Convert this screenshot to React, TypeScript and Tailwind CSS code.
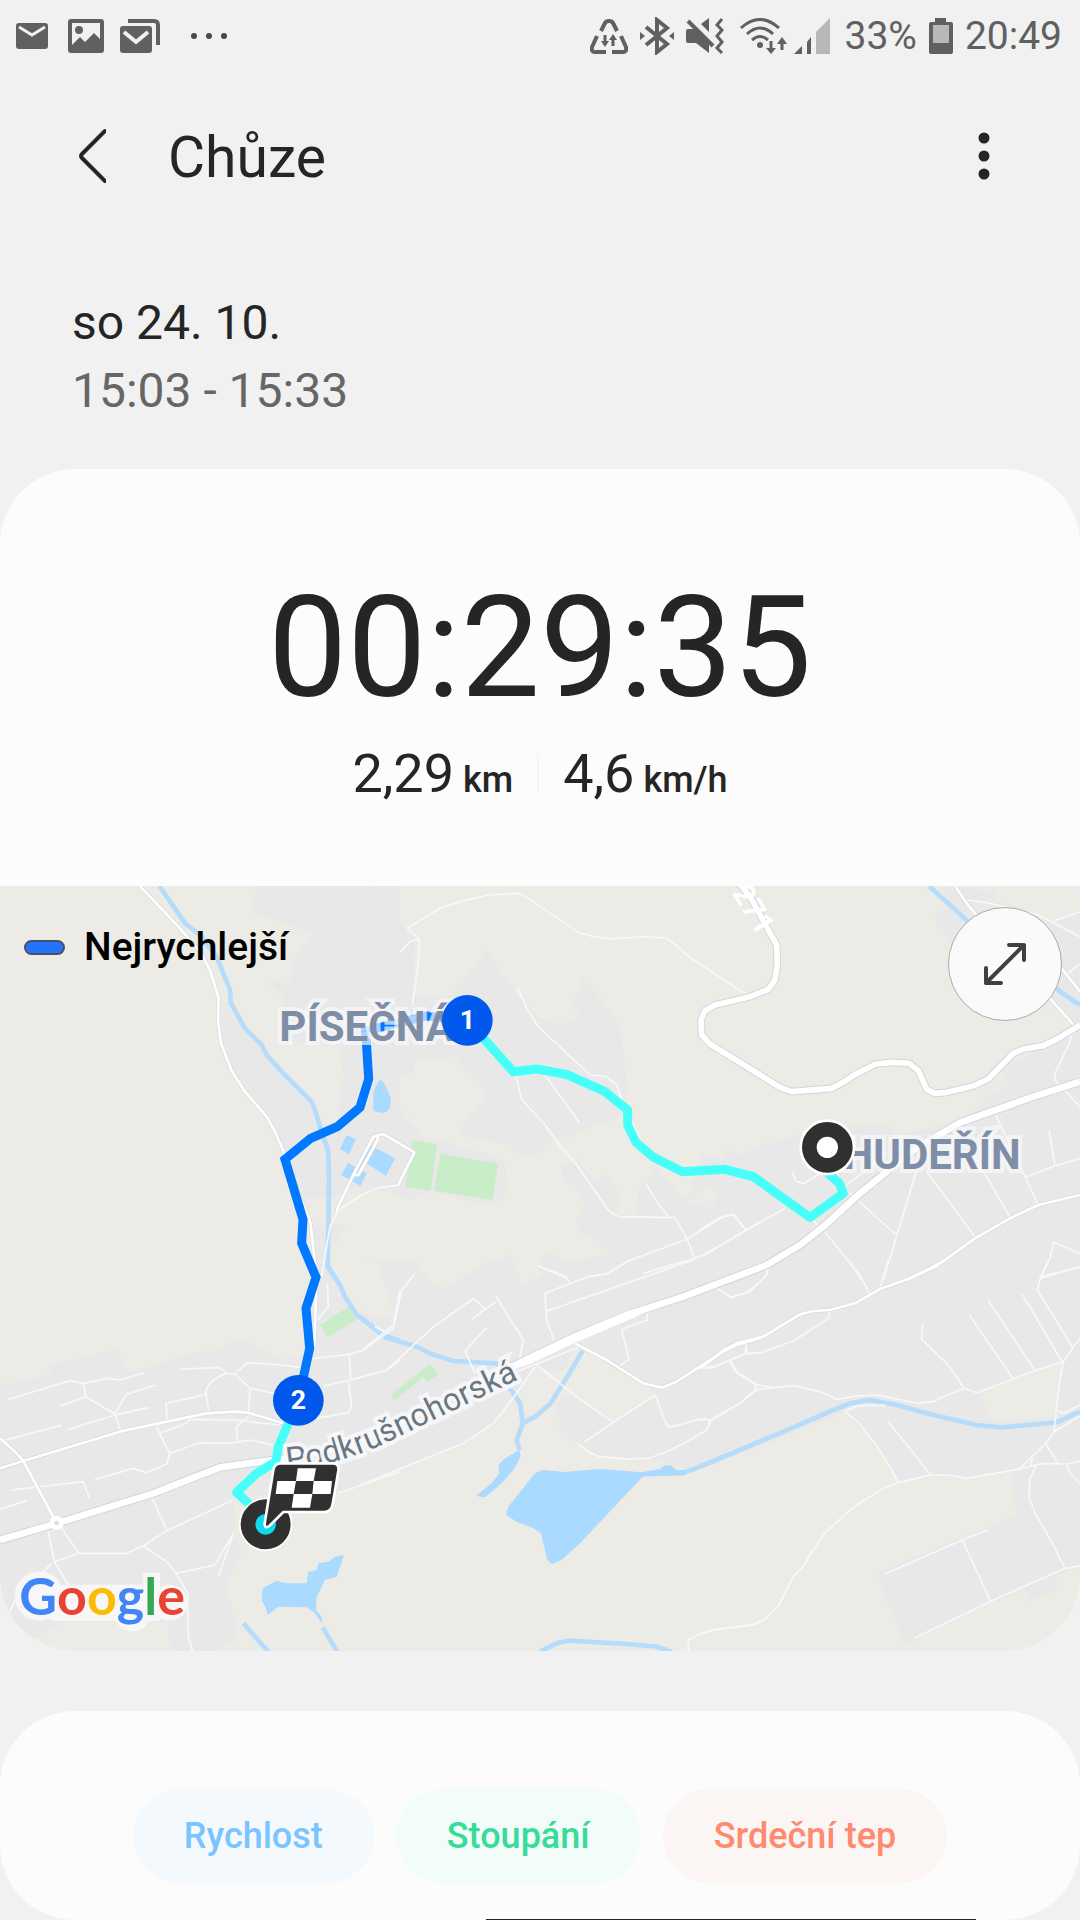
import { useState } from "react";

// The map is stored as six tiles, every tile with its own origin.
type Tile = {
  x: number;
  y: number;
  urban?: string;
  land?: string;
  park?: string;
  lake?: string;
  river?: string;
  street?: string;
  road?: string;
  highway?: string;
};

const TILES: Tile[] = [
  {
    x: 0,
    y: -18,
    urban:
      "M770,18 757,100 845,125 935,160 885,235 870,310 805,305 850,350 860,480 1020,500 1030,600 1010,720 965,740 940,680 860,590 790,500 720,430 690,370 662,370 656,470 690,575 735,640 800,710 850,815 900,955 1010,950 1050,920 1200,940 1200,18Z M925,1035 1035,1035 990,1120 970,1200 950,1200Z",
    lake: "M1120,690 V640 Q1130,605 1142,600 Q1155,605 1172,655 Q1175,695 1150,698 Q1125,698 1120,690Z M1040,765 1068,778 1047,823 1020,807Z M1115,795 1128,805 1185,835 1158,887 1098,850 1070,880 1085,840Z M1045,848 1070,865 1100,880 1082,917 1023,885Z",
    river:
      "M478,18 555,130 600,165 650,230 690,330 693,370 735,445 785,495 800,525 850,580 935,665 945,690 960,740 985,815 987,900 983,1160 1010,1200",
    street: "M1195,915 1130,925 1085,945 1015,990 990,1040 978,1110 965,1190",
    road: "M420,18 540,145 600,215 630,270 656,355 654,420 663,490 695,573 735,635 800,710 825,755 855,825 900,950 932,1030 945,1150 948,1200 M1012,995 V985 L1060,885 1120,770 1150,762 1243,817 1193,918 M1135,770 1130,785 1075,885 1062,885",
  },
  {
    x: 1080,
    y: -18,
    urban:
      "M0,18 38,18 50,60 165,170 160,350 275,345 380,212 470,345 530,410 610,435 660,400 635,375 670,293 780,435 800,600 790,705 690,740 630,770 585,775 530,830 480,830 445,795 300,765 305,740 385,640 285,530 165,545 160,580 105,585 120,690 190,770 410,830 435,850 445,920 430,960 375,975 215,935 145,960 60,920 0,945Z M890,865 970,955 1000,925 990,905 1030,880 1090,850 1095,805 1140,825 1200,800 1200,1200 480,1200 535,1165 555,1120 640,1145 760,1120 655,1050 650,1015 675,970 640,905 610,910 605,860 650,835 700,900 740,885 785,955 755,1000 830,1005 835,930Z M55,1155 165,1137 205,1200 70,1200Z M330,1200 450,1120 470,1200Z",
    land: "M985,970 1050,985 1080,950 1045,925 1010,940Z",
    park: "M157,780 231,793 212,933 135,920Z M241,821 414,850 398,960 222,932Z",
    street:
      "M157,375 175,250 178,178 142,145 240,85 310,62 385,45 478,40 520,65 655,157 700,170 750,177 850,170 920,174 1000,240 1155,340 M120,218 150,185 175,178 M472,322 500,385 535,440 690,585 740,590 770,615 785,660 M805,700 840,780 M468,590 485,658 555,735 610,810 655,860 740,985 760,1003 780,1010 945,1013 980,1075 1005,1135 M555,585 658,728 M860,915 890,965 925,1010 M535,1157 620,1190 M690,1190 745,1180 800,1145 980,1078 1090,1010 1120,1003 1158,1050 1200,1025 M850,1180 1005,1135 1035,1125 1158,1050",
  },
  {
    x: 2100,
    y: -18,
    urban:
      "M0,820 70,840 80,805 115,830 170,800 300,765 480,735 580,740 575,765 700,745 850,685 840,665 930,610 900,570 1030,500 1130,440 1140,440 1140,1200 0,1200Z M715,18 885,35 885,65 1020,105 1060,125 1140,100 1140,470 1050,350 750,180 710,130 705,100 755,80Z",
    land: "M0,935 35,925 60,950 30,985 0,970Z",
    river: "M687,18 805,125 M1070,325 1090,342 1140,375",
    street:
      "M800,60 860,68 1015,105 1140,170 M1055,125 1140,95 M1115,465 1110,485 1065,580 1065,600 1140,680 M885,700 1015,975 M450,940 587,1063 M650,870 550,1200 M680,875 825,1070 M820,820 930,1012 M905,735 880,740 M1047,750 1065,858 M975,892 1065,858 1140,835 M340,1022 370,1050 455,1155 485,1200 M275,875 290,905 312,910 380,870 M440,915 560,820 M255,985 0,1130 M0,1050 60,1012 100,1003 137,1050 M1060,1087 1140,1120 M1060,1087 1050,1135 1020,1195 1140,1160 M205,1160 200,1185 185,1200 M1100,285 1140,250",
    road: "M765,18 800,70 900,190 1000,300 1130,445 1140,450 M1085,265 1140,335 M1140,945 1015,975 930,1015 825,1075 710,1158 620,1200",
    highway:
      "M110,0 150,50 205,150 230,195 232,250 225,300 205,328 150,350 45,375 15,392 3,420 5,465 30,492 240,622 275,635 395,625 430,607 470,580 528,552 575,547 628,550 655,572 680,628 705,640 740,637 820,618 865,597 940,520 970,507 1030,497 1075,475 1140,435",
  },
  {
    x: 0,
    y: 1122,
    urban:
      "M0,375 150,345 148,315 355,268 385,340 575,280 660,270 715,232 850,300 900,290 945,150 960,0 985,0 1030,110 1060,150 1200,190 1200,625 1020,700 850,700 700,720 700,820 725,870 680,975 715,1130 650,1172 510,1172 505,1090 270,1040 100,1140 0,1140Z M1135,12 1200,0 1200,190 1185,155Z",
    park: "M960,195 1045,140 1068,180 985,232Z M1172,405 1200,382 1200,405 1185,420Z",
    lake: "M1032,886 1010,950 975,960 950,1010 948,1050 965,1070 965,1090 945,1060 920,1042 835,1040 803,1065 798,1045 785,1020 788,985 830,962 860,970 920,970 925,935 950,930 955,910 985,905 1005,890Z",
    river: "M983,0 985,20 1020,75 1035,110 1070,165 1150,225 1200,243 M730,1090 805,1175 M968,1102 1012,1175",
    street:
      "M20,420 210,362 250,370 325,355 360,360 435,338 M250,370 258,410 345,463 362,515 M183,437 258,410 M200,510 345,465 445,443 M345,460 380,403 468,375 M540,327 660,323 682,340 705,342 740,308 845,315 900,322 M627,460 618,400 Q618,360 682,340 M705,342 750,385 745,460 M750,385 830,402 M620,403 498,430 502,485 M470,500 478,520 560,490 570,478 700,480 840,495 M0,545 185,495 M478,520 510,580 500,612 440,638 400,625 285,658 M510,580 600,548 690,550 750,540 820,555 M745,470 710,500 712,545 M35,690 250,665 268,715 M0,748 80,722 M455,710 500,812 430,858 380,880 237,880 185,805 M237,880 163,905 145,815 M500,812 700,720 M163,905 205,975 M155,910 45,1020 30,1055 M430,858 500,905 528,940 645,915 700,820 M528,940 563,1000 565,1130 578,1175 M700,820 655,950 M925,297 1048,283 1085,272 1155,215 1180,195 1200,90 M1048,283 1052,360 1160,330 1200,300 M1045,365 1055,440 1045,457 950,475 M970,378 1052,360 M982,70 985,140 948,185 M1015,700 1200,635 M1125,200 1155,215",
    road: "M0,625 70,603 360,515 500,485 620,460 700,455 745,458 850,490 M0,535 45,575 70,603 165,780 M945,20 948,110 943,260",
  },
  {
    x: 1080,
    y: 1122,
    urban:
      "M0,0 1200,0 1200,540 980,630 890,600 860,595 720,590 660,555 590,495 605,480 580,450 610,400 660,420 760,487 890,400 650,250 620,320 600,340 525,320 470,400 400,490 310,550 0,675Z",
    land: "M0,0 55,10 85,100 105,180 0,155Z M165,0 205,60 245,90 400,0Z M460,0 485,75 545,45 535,18 550,0Z",
    park: "M92,405 210,312 235,342 205,367 190,352 105,420Z",
    lake: "M548,630 615,636 720,627 845,637 900,627 915,615 935,617 948,630 980,630 975,646 850,648 735,770 660,850 605,900 575,912 562,900 543,820 520,805 470,785 438,765 445,740 525,640Z M478,570 482,590 460,630 425,670 375,712 348,708 395,670 418,640 415,615 435,595Z",
    river:
      "M0,170 75,232 170,260 215,283 280,303 410,310 450,385 480,430 488,490 470,540 478,570 M668,272 625,345 570,432 525,470 488,490 M845,643 970,638 1000,628 1200,545 M540,1175 590,1150 625,1142 800,1152 890,1160 935,1175",
    street:
      "M0,278 100,205 125,90 165,40 M45,200 75,215 M0,352 80,330 215,205 340,115 375,147 335,180 M375,147 407,127 M408,110 490,240 478,300 M380,203 315,272 345,340 M0,675 310,550 400,490 470,400 525,320 M470,335 655,262 M530,315 665,422 760,487 675,545 M582,240 560,180 555,100 690,48 740,42 810,0 M555,155 970,10 1000,0 M535,18 620,55 630,68 M1070,85 1115,112 1165,95 1200,65 M860,155 862,180 785,208 807,298 780,317 M885,405 760,487 M885,405 920,495 930,502 1015,478 1050,480 1040,510 975,548 910,580 865,595 790,597 720,590 685,575 658,555 M1020,325 1060,322 1110,300 1160,280 1200,278 M1110,300 1130,335 1187,372 1187,390 1140,430 1050,480 M1160,280 1158,250 M985,1172 985,1140 1020,1122 1065,1108 1180,1093 1200,1083",
    road: "M645,250 740,300 850,370 905,383 950,365 1090,275 1130,255 1200,235",
  },
  {
    x: 2100,
    y: 1122,
    urban:
      "M0,0 1140,0 1140,920 1100,930 1065,950 1075,985 990,1022 970,990 870,1030 615,1152 530,940 950,765 930,635 800,655 690,645 595,670 520,540 435,455 0,630Z",
    land: "M835,400 1090,305 1065,470 885,490Z",
    river: "M0,620 250,515 400,450 450,430 510,420 590,435 700,465 830,495 905,502 1070,487 1140,455",
    street:
      "M50,85 95,112 150,95 200,45 200,20 M445,0 480,45 508,100 M565,0 540,85 M0,322 45,320 135,282 185,277 280,243 385,175 390,152 M135,282 140,250 M90,302 105,335 165,372 215,383 285,377 370,398 410,418 470,408 530,405 655,430 700,425 730,410 792,385 M167,372 167,390 215,383 M167,390 120,430 35,480 20,510 0,522 M0,475 35,480 M668,187 665,238 745,315 792,385 830,398 940,357 1005,332 1090,305 M808,165 940,357 M865,122 1005,332 M967,103 1085,303 M1045,0 1023,50 1012,90 1118,263 1140,235 M1023,50 1140,22 M1118,263 1090,305 1078,370 1062,515 1140,468 M1065,450 1090,460 1140,435 M1062,515 1037,550 958,627 M1037,550 1075,612 M990,620 998,595 M435,455 440,450 475,437 555,436 M435,455 475,487 525,550 570,620 595,668 650,655 692,645 740,645 800,655 958,627 1030,610 1100,612 1140,603 M1100,612 1110,640 1140,670 M565,485 692,645 M595,668 550,685 470,735 435,763 370,825 335,875 312,917 280,950 235,1038 195,1078 160,1095 45,1110 0,1122 M1010,615 990,655 987,710 1005,760 1055,845 1095,925 1140,918 M1095,925 870,1025 645,1133 M787,840 872,1025 M553,943 787,840 862,810",
    road: "M0,325 75,268 110,250 190,230 300,163 340,153 390,150 465,130 540,87 630,55 700,20 735,0",
  },
];

const MAIN_ROAD =
  "M3240,587 3100,632 2880,710 2740,792 2580,922 2470,1022 2400,1077 2300,1137 2050,1232 1890,1284 1720,1354 1540,1440 1200,1610 1000,1690 860,1718 820,1722 660,1744 460,1822 170,1912 0,1962";

function TileLayer({ name, ...rest }: { name: Exclude<keyof Tile, "x" | "y"> } & React.SVGProps<SVGGElement>) {
  return (
    <g fill="none" strokeLinejoin="round" {...rest}>
      {TILES.map((t) => (
        <path key={`${t.x}-${t.y}`} d={t[name] ?? ""} transform={`translate(${t.x} ${t.y})`} />
      ))}
    </g>
  );
}

function GoogleLogo() {
  return (
    <g>
      {/* light plate that keeps the logo readable on the map */}
      <g fill="#f7f7f7">
        <circle cx="118" cy="2130" r="74" />
        <rect x="118" y="2096" width="390" height="108" rx="50" />
        <rect x="345" y="2096" width="106" height="140" rx="50" />
        <rect x="428" y="2060" width="52" height="144" />
        <circle cx="510" cy="2150" r="54" />
      </g>
      <text x="58" y="2187" fontFamily="Lato, sans-serif" fontWeight="700" fontSize="156">
        <tspan fill="#4285f4">G</tspan>
        <tspan fill="#ea4335">o</tspan>
        <tspan fill="#fbbc05">o</tspan>
        <tspan fill="#4285f4">g</tspan>
        <tspan fill="#34a853">l</tspan>
        <tspan fill="#ea4335">e</tspan>
      </text>
    </g>
  );
}

function RouteMap() {
  return (
    <svg viewBox="0 0 3240 2295" className="block w-full bg-[#ecebe6]" fontFamily="Roboto, sans-serif">
      <TileLayer name="urban" fill="#e8e8e8" />
      <TileLayer name="land" fill="#ecebe6" />
      <TileLayer name="park" fill="#c9edc9" />
      <TileLayer name="river" stroke="#b5dcfb" strokeWidth="14" />
      <TileLayer name="lake" fill="#aadaff" />
      <TileLayer name="street" stroke="#f8f8fa" strokeWidth="5" />
      <TileLayer name="road" stroke="#d9dadd" strokeWidth="12" />
      <TileLayer name="road" stroke="#fff" strokeWidth="8" />
      <TileLayer name="highway" stroke="#d3d5da" strokeWidth="23" />
      <TileLayer name="highway" stroke="#fff" strokeWidth="17" />
      <g fill="none" strokeLinejoin="round">
        <path d={MAIN_ROAD} stroke="#d3d5da" strokeWidth="26" />
        <path d={MAIN_ROAD} stroke="#fff" strokeWidth="20" />
        <path d="M1535,1434 1580,1410 1720,1343 1880,1276 1970,1250 1970,1262 1895,1298 1730,1368 1590,1434 1545,1450Z" fill="#fff" />
      </g>
      <circle cx="170" cy="1911" r="14" fill="#dcdcde" stroke="#fff" strokeWidth="14" />

      <text
        transform="translate(2276 152) rotate(58)"
        textAnchor="end"
        fontSize="90"
        fontWeight="700"
        fill="#fff"
      >
        271
      </text>

      <g fill="none" strokeWidth="27" strokeLinejoin="round">
        <path
          d="M1402,403 1280,390 1097,435 1106,579 1080,664 1012,722 932,757 855,820 909,1000 905,1072 948,1174 918,1267 929,1387 895,1543"
          stroke="#0078ff"
          strokeLinejoin="miter"
        />
        <path
          d="M1402,403 1540,557 1610,549 1700,565 1815,617 1883,672 1883,717 1908,769 1958,812 2048,857 2175,850 2260,872 2430,994 2530,922 2518,892 2482,860 M895,1543 835,1682 828,1727 770,1762 710,1819 797,1900"
          stroke="#46fff8"
        />
      </g>

      <g stroke="#f8f9fb" strokeOpacity="0.7" strokeWidth="24" paintOrder="stroke" strokeLinejoin="miter">
        <text x="838" y="465" fontSize="126" fontWeight="700" fill="#7e8ea6">
          PÍSEČNÁ
        </text>
        <text x="3062" y="849" fontSize="126" fontWeight="700" fill="#7e8ea6" textAnchor="end">
          CHUDEŘÍN
        </text>
        <path id="street-name" d="M862,1752 Q1040,1735 1200,1650 L1620,1450" fill="none" stroke="none" />
        <text fontSize="96" fill="#6b7780" strokeOpacity="0.9">
          <textPath href="#street-name">Podkrušnohorská</textPath>
        </text>
      </g>

      <circle cx="2482" cy="784" r="54" fill="#fff" stroke="#fff" strokeWidth="60" />
      <circle cx="2482" cy="784" r="54" fill="#fff" stroke="#303030" strokeWidth="44" />
      <circle cx="797" cy="1915" r="66" fill="#fff" stroke="#fff" strokeWidth="28" />
      <circle cx="797" cy="1915" r="53" fill="#12d8f0" stroke="#303030" strokeWidth="44" />
      <path
        d="M842,1732 H998 Q1018,1732 1015,1755 L998,1855 Q994,1878 972,1878 H850 L808,1920 Q794,1930 794,1912 L820,1752 Q823,1732 842,1732Z"
        fill="#303030"
        stroke="#fff"
        strokeWidth="8"
      />
      <path
        d="M893,1747 H948 L941,1785 H996 L992,1824 H937 L930,1865 H875 L881,1824 H827 L832,1785 H888Z M888,1785 881,1824 H937 L941,1785Z"
        fill="#fff"
        fillRule="evenodd"
      />

      <g fill="#0058ec">
        <circle cx="1402" cy="403" r="76" />
        <circle cx="895" cy="1543" r="76" />
      </g>
      <g fill="#fff" fontSize="80" fontWeight="700" textAnchor="middle">
        <text x="1402" y="429">1</text>
        <text x="895" y="1569">2</text>
      </g>

      <GoogleLogo />
    </svg>
  );
}

function StatusBar() {
  return (
    <div className="flex h-[72px] items-center justify-between pl-4 pr-[18px] text-[#606060]">
      <div className="flex items-center">
        <svg width="32" height="26" viewBox="0 0 32 26" className="mr-5">
          <rect width="32" height="26" rx="3" fill="currentColor" />
          <path d="M3,4 L16,12 29,4" fill="none" stroke="#f1f1f1" strokeWidth="3" />
        </svg>
        <svg width="36" height="34" viewBox="0 0 36 34" className="mr-4">
          <path
            d="M3,0 H33 Q36,0 36,3 V31 Q36,34 33,34 H3 Q0,34 0,31 V3 Q0,0 3,0Z M4,4 V26 L12,18 17,23 26,14 32,20 V4Z"
            fill="currentColor"
            fillRule="evenodd"
          />
          <circle cx="11" cy="11" r="4" fill="currentColor" />
        </svg>
        <svg width="40" height="34" viewBox="0 0 40 34" className="mr-[31px]">
          <path d="M8,2 H34 Q38,2 38,6 V26" fill="none" stroke="currentColor" strokeWidth="4" />
          <rect y="7" width="32" height="27" rx="3" fill="currentColor" />
          <path d="M4,13 L16,23 28,13" fill="none" stroke="#f1f1f1" strokeWidth="4" />
        </svg>
        <svg width="36" height="6" viewBox="0 0 36 6">
          <g fill="#484848">
            <circle cx="3" cy="3" r="3" />
            <circle cx="18" cy="3" r="3" />
            <circle cx="33" cy="3" r="3" />
          </g>
        </svg>
      </div>

      <div className="flex items-center gap-3 text-[39px] leading-[48px]">
        <svg width="38" height="36" viewBox="0 0 38 36" fill="none" stroke="currentColor" strokeWidth="4">
          <path d="M11,13 L15,5 Q16,3 19,3 Q22,3 23,5 L27,13 M7,18 L2,29 Q1,34 5,34 H16 M31,18 L36,29 Q37,34 33,34 H22" />
          <path d="M15,17 V25 M23,28 V20" strokeWidth="3" />
          <path d="M11,23 H19 L15,29Z M19,22 H27 L23,16Z" fill="currentColor" stroke="none" />
        </svg>
        <svg width="34" height="38" viewBox="0 0 34 38" fill="none" stroke="currentColor" strokeWidth="4">
          <path d="M6,10 L27,27 17,35 V3 L27,11 6,28" />
          <path d="M0,15 L5,19 0,23Z M34,15 L29,19 34,23Z" fill="currentColor" stroke="none" />
        </svg>
        <svg width="38" height="36" viewBox="0 0 38 36" className="mr-1" fill="none" stroke="currentColor">
          <path d="M2,11 H8 L23,26 V35 L10,25 H2 Q0,25 0,23 V13 Q0,11 2,11Z M15,6 L23,0 V14Z" fill="currentColor" stroke="none" />
          <path d="M2,3 L27,28" strokeWidth="4" />
          <path d="M36,1 L31,7 36,12 31,18 36,24 31,30 36,35" strokeWidth="3" />
        </svg>
        <div className="mr-0.5 flex items-center gap-1.5">
          <svg width="48" height="37" viewBox="0 0 48 37" fill="none" stroke="currentColor" strokeWidth="3">
            <path d="M1,10 Q20,-7 39,10 M7,16 Q20,4 33,16 M12,22 Q20,15 28,22" />
            <circle cx="20" cy="27" r="3" fill="currentColor" stroke="none" />
            <path d="M31,23 V33 M42,32 V22" />
            <path d="M26,30 H36 L31,36Z M37,26 H47 L42,19Z" fill="currentColor" stroke="none" />
          </svg>
          <svg width="36" height="37" viewBox="0 0 36 37" fill="currentColor">
            <path d="M0,36 L8,28 V36Z M13,24 L17,19 V36 H13Z" />
            <path d="M22,14 L36,0 V36 H22Z" fill="#b8b8b8" />
          </svg>
        </div>
        <span>33%</span>
        <svg width="24" height="36" viewBox="0 0 24 36">
          <path d="M6,0 H17 V4 H22 Q24,4 24,6 V34 Q24,36 22,36 H2 Q0,36 0,34 V6 Q0,4 2,4 H6Z" fill="currentColor" />
          <path d="M4,7 H20 V25 H4Z" fill="#b8b8b8" />
        </svg>
        <span>20:49</span>
      </div>
    </div>
  );
}

const METRICS = [
  { label: "Rychlost", className: "bg-[#f4f9fd] text-[#7cc4ff]" },
  { label: "Stoupání", className: "bg-[#f2fcf8] text-[#36dc98]" },
  { label: "Srdeční tep", className: "bg-[#fbf5f4] text-[#ff8a70]" },
];

export default function App() {
  const [metric, setMetric] = useState("");

  return (
    <div className="relative min-h-screen overflow-hidden bg-[#f1f1f1] font-[Roboto,sans-serif] text-[#252525]">
      <StatusBar />

      <header className="flex h-[168px] items-center pl-[78px] pr-[90px]">
        <button aria-label="Zpět" className="mr-[62px]">
          <svg width="28" height="56" viewBox="0 0 28 56" fill="none" stroke="currentColor" strokeWidth="4" strokeLinecap="round" strokeLinejoin="round">
            <path d="M27,3 L4,26 Q2,28 4,30 L27,53" />
          </svg>
        </button>
        <h1 className="pt-1 text-[57px] leading-[68px]">Chůze</h1>
        <button aria-label="Další možnosti" className="ml-auto">
          <svg width="12" height="48" viewBox="0 0 12 48" fill="currentColor">
            <circle cx="6" cy="6" r="5.5" />
            <circle cx="6" cy="24" r="5.5" />
            <circle cx="6" cy="42" r="5.5" />
          </svg>
        </button>
      </header>

      <div className="px-18 pt-[49px] pb-11 text-[48px] leading-[68px]">
        <p>so 24. 10.</p>
        <p className="text-[#666]">15:03 - 15:33</p>
      </div>

      <section className="overflow-hidden rounded-[75px] bg-[#fcfcfc]">
        <div className="pt-[99px] pb-20">
          <p className="text-center text-[141px] leading-[160px]">00:29:35</p>
          <div className="mt-[14px] flex h-16 items-center justify-center text-[54px] leading-[64px]">
            <p>
              2,29<span className="text-[36px] leading-none font-medium"> km</span>
            </p>
            <div className="mx-6 h-10 w-[2px] bg-[#f6f6f6]" />
            <p>
              4,6<span className="text-[36px] leading-none font-medium"> km/h</span>
            </p>
          </div>
        </div>

        <div className="relative">
          <RouteMap />
          <div className="absolute top-9 left-6 flex items-center gap-[19px] text-[39px] leading-[50px] font-medium text-black">
            <span className="h-[15px] w-[41px] rounded-full border-2 border-[#45506a] bg-[#2474fa]" />
            Nejrychlejší
          </div>
          <button
            aria-label="Zvětšit mapu"
            className="absolute top-[21px] right-[18px] flex size-[114px] items-center justify-center rounded-full border border-[#aaa] bg-[#fafafa] text-[#404040]"
          >
            <svg width="44" height="44" viewBox="0 0 44 44" fill="none" stroke="currentColor" strokeWidth="4" strokeLinecap="round" strokeLinejoin="round">
              <path d="M3,41 L41,3 M26,3 H39 Q41,3 41,5 V18 M3,26 V39 Q3,41 5,41 H18" />
            </svg>
          </button>
        </div>
      </section>

      <section className="mt-[60px] flex justify-center gap-[22px] rounded-[75px] bg-[#fcfcfc] pt-[78px] pb-[37px]">
        {METRICS.map((m) => (
          <button
            key={m.label}
            aria-pressed={metric === m.label}
            onClick={() => setMetric(m.label)}
            className={`h-[94px] rounded-full px-[51px] text-[36px] font-medium ${m.className}`}
          >
            {m.label}
          </button>
        ))}
      </section>

      <div className="absolute bottom-0 left-[45%] h-px w-[490px] bg-[#252525]" />
    </div>
  );
}
